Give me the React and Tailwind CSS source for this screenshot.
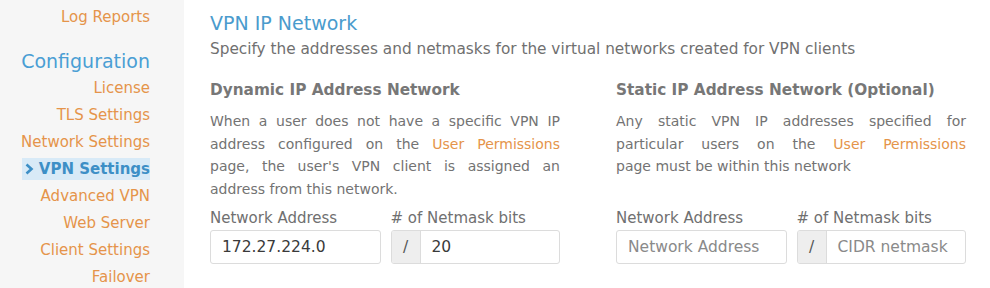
const navTop = ["License", "TLS Settings", "Network Settings"];
const navBottom = ["Advanced VPN", "Web Server", "Client Settings", "Failover"];

const font = { fontFamily: '"DejaVu Sans", Verdana, sans-serif' };

function Sidebar() {
  return (
    <aside className="w-[184px] shrink-0 bg-[#f6f6f6] pr-[34px] pt-[4px] text-right text-[15px] leading-[27px] text-[#e5944a]">
      <div>Log Reports</div>
      <div className="mt-[15.5px] text-[19px] leading-[28px] text-[#4a9ed4]">Configuration</div>
      {navTop.map((n) => (
        <div key={n}>{n}</div>
      ))}
      <div className="flex justify-end">
        <div className="my-[2.5px] flex h-[22px] w-[128px] items-center justify-between bg-[#d8eaf7] pl-[2px] font-bold leading-[22px] text-[#3d8fc6]">
          <svg width="10" height="14" viewBox="0 0 10 14">
            <path d="M2.5 2.5 L7.5 7 L2.5 11.5" stroke="#3d8fc6" strokeWidth="2.6" fill="none" />
          </svg>
          <span>VPN Settings</span>
        </div>
      </div>
      {navBottom.map((n) => (
        <div key={n}>{n}</div>
      ))}
    </aside>
  );
}

function Field({ label, value, placeholder }) {
  return (
    <div className="w-[171px]">
      <div className="mb-[2px] text-[15px] leading-[20px] text-[#707070]">{label}</div>
      <div className="flex h-[34px] items-center rounded-[3px] border border-[#dcdcdc] bg-white px-[11px] text-[15.5px]">
        {value ? <span className="text-[#3a3a3a]">{value}</span> : <span className="text-[#8a8a8a]">{placeholder}</span>}
      </div>
    </div>
  );
}

function MaskField({ label, value, placeholder }) {
  return (
    <div className="w-[170px]">
      <div className="mb-[2px] text-[15px] leading-[20px] text-[#707070]">{label}</div>
      <div className="flex h-[34px] overflow-hidden rounded-[3px] border border-[#dcdcdc] bg-white text-[15.5px]">
        <div className="flex w-[29px] items-center justify-center border-r border-[#dcdcdc] bg-[#eeeeee] text-[#555]">/</div>
        <div className="flex items-center px-[11px]">
          {value ? <span className="text-[#3a3a3a]">{value}</span> : <span className="text-[#8a8a8a]">{placeholder}</span>}
        </div>
      </div>
    </div>
  );
}

function Link({ children }) {
  return <span className="text-[#e5944a]">{children}</span>;
}

export default function App() {
  return (
    <div className="flex h-[288px] w-[990px] overflow-hidden bg-white" style={font}>
      <Sidebar />
      <main className="ml-[26px] w-[756px] pt-[10px]">
        <h2 className="text-[19px] leading-[26px] text-[#4a9bcd]">VPN IP Network</h2>
        <p className="mt-[2px] text-[15.3px] leading-[22px] text-[#707070]">
          Specify the addresses and netmasks for the virtual networks created for VPN clients
        </p>
        <div className="mt-[19px] grid grid-cols-[350px_350px] gap-x-[56px]">
          <h3 className="text-[15.3px] font-bold leading-[22px] text-[#777]">Dynamic IP Address Network</h3>
          <h3 className="text-[15.3px] font-bold leading-[22px] text-[#777]">Static IP Address Network (Optional)</h3>
          <p className="mt-[9px] text-justify text-[14px] leading-[22.6px] text-[#737373]">
            When a user does not have a specific VPN IP address configured on the <Link>User Permissions</Link> page,
            the user's VPN client is assigned an address from this network.
          </p>
          <div className="mt-[9px] text-[14px] leading-[22.6px] text-[#737373]">
            <p className="text-justify [text-align-last:justify]">
              Any static VPN IP addresses specified for particular users on the <Link>User Permissions</Link>
            </p>
            <p>page must be within this network</p>
          </div>
          <div className="mt-[8px] flex gap-[10px]">
            <Field label="Network Address" value="172.27.224.0" />
            <MaskField label="# of Netmask bits" value="20" />
          </div>
          <div className="mt-[8px] flex gap-[10px]">
            <Field label="Network Address" placeholder="Network Address" />
            <MaskField label="# of Netmask bits" placeholder="CIDR netmask" />
          </div>
        </div>
      </main>
    </div>
  );
}
